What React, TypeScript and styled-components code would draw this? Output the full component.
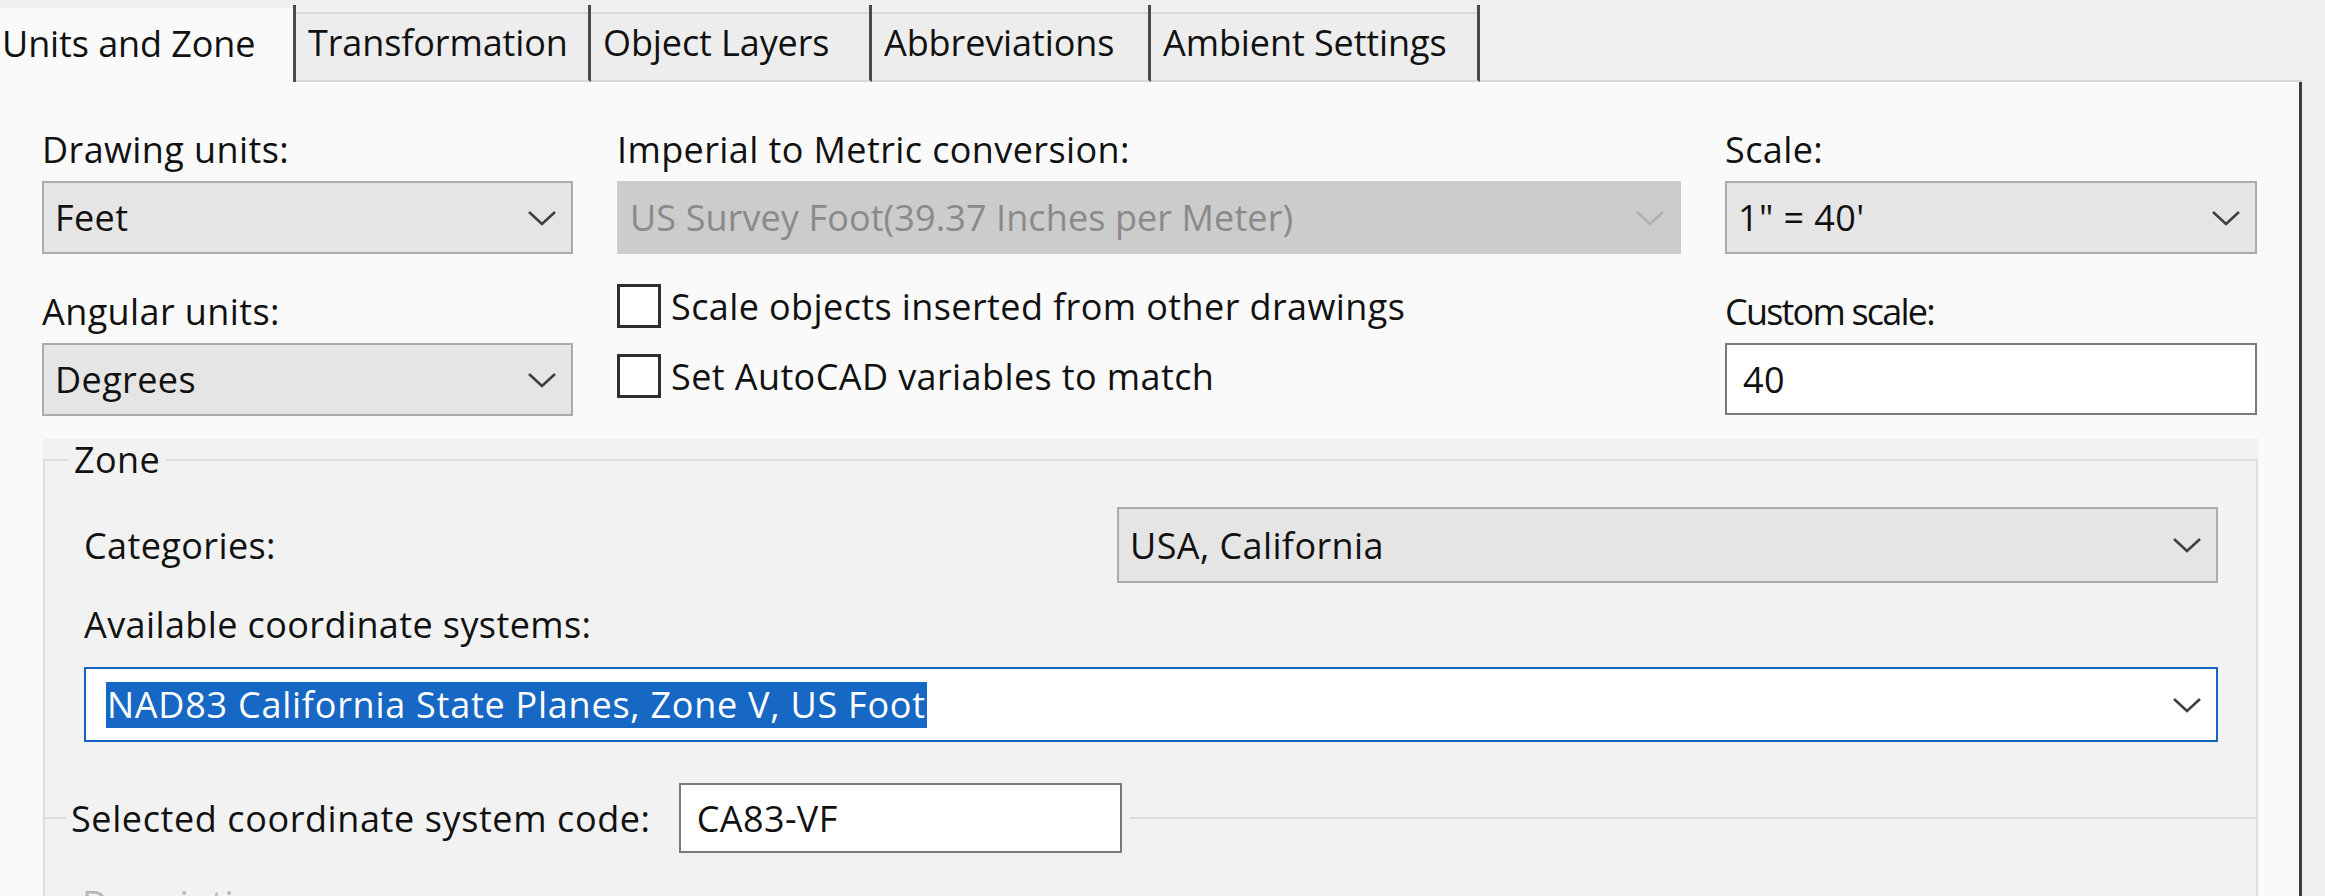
import React from "react";
import styled, { createGlobalStyle, css } from "styled-components";

const GlobalStyle = createGlobalStyle`
  html, body {
    margin: 0;
    padding: 0;
    background: #f0f0f0;
    overflow: hidden;
  }
  * { box-sizing: border-box; }
  body {
    font-family: "Open Sans", "Noto Sans", "Liberation Sans", sans-serif;
    font-size: 36px;
    color: #111111;
    letter-spacing: 0.4px;
  }
`;

const Window = styled.div`
  width: 2325px;
  height: 896px;
  display: flex;
  flex-direction: column;
  background: #f0f0f0;
  overflow: hidden;
`;

const TabStrip = styled.div`
  width: 2302px;
  height: 82px;
  display: flex;
  flex-shrink: 0;
`;

const Tab = styled.div<{ $active?: boolean; $w: number }>`
  width: ${(p) => p.$w}px;
  margin-top: 5px;
  height: 77px;
  display: flex;
  align-items: center;
  padding-left: ${(p) => (p.$active ? 2 : 12)}px;
  border-right: 3px solid #4a4a4a;
  white-space: nowrap;
  letter-spacing: -0.1px;
  ${(p) =>
    p.$active
      ? css`
          background: linear-gradient(to bottom, transparent 3px, #fafafa 3px);
        `
      : css`
          background: linear-gradient(to bottom, transparent 7px, #d9d9d9 7px, #d9d9d9 9px, #ededed 9px);
          border-bottom: 2px solid #d8d8d8;
        `}
`;

const TabFiller = styled.div`
  flex: 1;
  border-bottom: 2px solid #d8d8d8;
`;

const Panel = styled.div`
  width: 2302px;
  flex: 1;
  background: #fafafa;
  border-right: 3px solid #3c3c3c;
  padding: 45px 41px 0 42px;
  overflow: hidden;
`;

const TopGrid = styled.div`
  display: grid;
  grid-template-columns: 531px 1064px 532px;
  column-gap: 44px;
`;

const Column = styled.div`
  display: flex;
  flex-direction: column;
`;

const Label = styled.div<{ $mt?: number; $faint?: boolean; $tight?: boolean }>`
  height: 46px;
  line-height: 46px;
  margin-top: ${(p) => p.$mt ?? 0}px;
  margin-bottom: 8px;
  white-space: nowrap;
  color: ${(p) => (p.$faint ? "#b8b8b8" : "#111111")};
  ${(p) => (p.$tight ? "letter-spacing: -1.8px;" : "")}
`;

type ComboKind = "normal" | "disabled" | "focused";

const ComboBox = styled.div<{ $kind: ComboKind; $h?: number; $w?: number }>`
  height: ${(p) => p.$h ?? 73}px;
  ${(p) => (p.$w ? `width: ${p.$w}px; flex-shrink: 0;` : "")}
  display: flex;
  align-items: center;
  justify-content: space-between;
  padding: 0 14px 0 ${(p) => (p.$kind === "focused" ? 20 : 11)}px;
  white-space: nowrap;
  ${(p) =>
    p.$kind === "normal"
      ? css`
          background: #e5e5e5;
          border: 2px solid #ababab;
          color: #111111;
        `
      : p.$kind === "disabled"
      ? css`
          background: #cccccc;
          border: 2px solid #cccccc;
          color: #8a8a8a;
          letter-spacing: 0.1px;
        `
      : css`
          background: #ffffff;
          border: 2px solid #1565c0;
          color: #111111;
        `}
`;

const Highlight = styled.span`
  background: #1768c4;
  color: #ffffff;
  line-height: 46px;
  padding: 0 1px;
  letter-spacing: 0.75px;
`;

const TextBox = styled.div<{ $w?: number; $h?: number }>`
  height: ${(p) => p.$h ?? 72}px;
  ${(p) => (p.$w ? `width: ${p.$w}px; flex-shrink: 0;` : "")}
  background: #ffffff;
  border: 2px solid #7a7a7a;
  display: flex;
  align-items: center;
  padding-left: 16px;
  white-space: nowrap;
`;

const CheckRow = styled.div<{ $mt: number }>`
  height: 46px;
  margin-top: ${(p) => p.$mt}px;
  display: flex;
  align-items: center;
  gap: 10px;
  white-space: nowrap;
`;

const CheckBox = styled.div`
  width: 44px;
  height: 44px;
  border: 3px solid #2e2e2e;
  background: #ffffff;
  flex-shrink: 0;
`;

const Group = styled.div`
  margin: 22px 0 0 1px;
  background: #f2f2f2;
`;

const Frame = styled.fieldset`
  margin: 0;
  min-width: 0;
  border: 2px solid #dedede;
  border-bottom: none;
  padding: 0 38px 40px 39px;
`;

const Legend = styled.legend`
  margin-left: -16px;
  padding: 0 6px;
  line-height: 44px;
  height: 44px;
`;

const CategoryRow = styled.div`
  margin-top: 25px;
  display: flex;
  align-items: center;
  justify-content: space-between;
`;

const SectionLabel = styled(Label)`
  margin-top: 19px;
  margin-bottom: 19px;
`;

const DividerRow = styled.div`
  margin: 41px -38px 0 -39px;
  display: flex;
  align-items: center;
  height: 70px;
`;

const Rule = styled.div<{ $w?: number }>`
  height: 2px;
  background: #dcdcdc;
  ${(p) => (p.$w ? `width: ${p.$w}px; flex-shrink: 0;` : "flex: 1;")}
`;

const DividerLabel = styled.div`
  margin: 0 28px 0 5px;
  white-space: nowrap;
  letter-spacing: 0.6px;
`;

const TailRule = styled(Rule)`
  margin-left: 8px;
`;

const FaintLabel = styled(Label)`
  margin-top: 28px;
  margin-left: -2px;
`;

const Chevron: React.FC<{ faded?: boolean }> = ({ faded }) => (
  <svg width="30" height="18" viewBox="0 0 30 18" style={{ flexShrink: 0 }}>
    <polyline
      points="2,3 15,15 28,3"
      fill="none"
      stroke={faded ? "#b0b0b0" : "#3f3f3f"}
      strokeWidth="2.6"
    />
  </svg>
);

const tabs = [
  { label: "Units and Zone", w: 296, active: true },
  { label: "Transformation", w: 295 },
  { label: "Object Layers", w: 281 },
  { label: "Abbreviations", w: 279 },
  { label: "Ambient Settings", w: 329 },
];

export default function App() {
  return (
    <>
      <GlobalStyle />
      <Window>
        <TabStrip>
          {tabs.map((t) => (
            <Tab key={t.label} $w={t.w} $active={t.active}>
              {t.label}
            </Tab>
          ))}
          <TabFiller />
        </TabStrip>
        <Panel>
          <TopGrid>
            <Column>
              <Label>Drawing units:</Label>
              <ComboBox $kind="normal">
                <span>Feet</span>
                <Chevron />
              </ComboBox>
              <Label $mt={35}>Angular units:</Label>
              <ComboBox $kind="normal">
                <span>Degrees</span>
                <Chevron />
              </ComboBox>
            </Column>
            <Column>
              <Label>Imperial to Metric conversion:</Label>
              <ComboBox $kind="disabled">
                <span>US Survey Foot(39.37 Inches per Meter)</span>
                <Chevron faded />
              </ComboBox>
              <CheckRow $mt={29}>
                <CheckBox />
                <span>Scale objects inserted from other drawings</span>
              </CheckRow>
              <CheckRow $mt={24}>
                <CheckBox />
                <span>Set AutoCAD variables to match</span>
              </CheckRow>
            </Column>
            <Column>
              <Label>Scale:</Label>
              <ComboBox $kind="normal">
                <span>1" = 40'</span>
                <Chevron />
              </ComboBox>
              <Label $mt={35} $tight>
                Custom scale:
              </Label>
              <TextBox>40</TextBox>
            </Column>
          </TopGrid>
          <Group>
            <Frame>
              <Legend>Zone</Legend>
              <CategoryRow>
                <span>Categories:</span>
                <ComboBox $kind="normal" $h={76} $w={1101}>
                  <span>USA, California</span>
                  <Chevron />
                </ComboBox>
              </CategoryRow>
              <SectionLabel>Available coordinate systems:</SectionLabel>
              <ComboBox $kind="focused" $h={75}>
                <Highlight>NAD83 California State Planes, Zone V, US Foot</Highlight>
                <Chevron />
              </ComboBox>
              <DividerRow>
                <Rule $w={21} />
                <DividerLabel>Selected coordinate system code:</DividerLabel>
                <TextBox $w={443} $h={70}>CA83-VF</TextBox>
                <TailRule />
              </DividerRow>
              <FaintLabel $faint>Description:</FaintLabel>
            </Frame>
          </Group>
        </Panel>
      </Window>
    </>
  );
}
